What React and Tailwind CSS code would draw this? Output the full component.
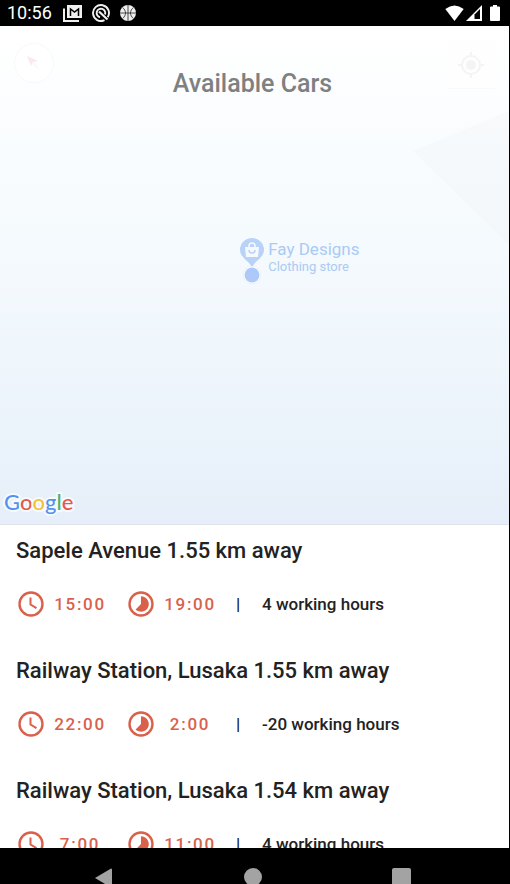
import React from 'react'

const cars = [
  { id: 1, title: 'Sapele Avenue 1.55 km away', from: '15:00', to: '19:00', hours: 4 },
  { id: 2, title: 'Railway Station, Lusaka 1.55 km away', from: '22:00', to: '2:00', hours: -20 },
  { id: 3, title: 'Railway Station, Lusaka 1.54 km away', from: '7:00', to: '11:00', hours: 4 },
]

function StatusBar() {
  return (
    <header className="flex h-[26px] shrink-0 items-center justify-between bg-black pr-2 pl-[7px] text-white">
      <div className="flex items-center">
        <span className="w-14 text-lg leading-6">10:56</span>
        <svg className="h-[17px] w-[19px]" viewBox="0 0 19 17" fill="none" stroke="#f0f0f0" strokeWidth="2" aria-hidden="true">
          <path d="M1 3.5v12.5h15" />
          <path d="M4 0h15v13H4z" fill="#f0f0f0" stroke="none" />
          <path d="M7.5 11V4l4 3 4-3v7" stroke="#000" strokeWidth="1.5" />
        </svg>
        <svg className="ml-[10px] h-[18px] w-[18px]" viewBox="0 0 18 18" fill="none" stroke="#f0f0f0" strokeWidth="1.9" aria-hidden="true">
          <path d="M12.5 16.2A8 8 0 1 1 15.8 13.2" />
          <path d="M8 13.2A4.3 4.3 0 1 1 13 10.5" />
          <path d="M7 7.5l8.5 8" strokeWidth="2.2" />
        </svg>
        <svg className="ml-[10px] h-4 w-4" viewBox="0 0 16 16" aria-hidden="true">
          <circle cx="8" cy="8" r="8" fill="#eee" />
          <path d="M8 0v16M0 8h16M2.5 2.5c4 3 4 8 0 11M13.5 2.5c-4 3-4 8 0 11" fill="none" stroke="#222" strokeWidth="0.8" />
        </svg>
      </div>
      <div className="flex items-center">
        <svg className="h-4 w-[19px]" viewBox="0 0 19 16" fill="#fff" aria-hidden="true">
          <path d="M9.5 16L0.3 4Q9.5-3 18.7 4z" />
        </svg>
        <svg className="ml-[2px] h-4 w-4" viewBox="0 0 16 16" aria-hidden="true">
          <path d="M0 16L16 0v16z" fill="#fff" />
          <path d="M8.5 9.5L14 4v10H8.5z" fill="#000" />
        </svg>
        <svg className="mr-px ml-2 h-4 w-[10px]" viewBox="0 0 10 16" fill="#fff" aria-hidden="true">
          <path d="M3 0h4v1.5h2q1 0 1 1V15q0 1-1 1H1q-1 0-1-1V2.5q0-1 1-1h2z" />
        </svg>
      </div>
    </header>
  )
}

function GoogleLogo() {
  return (
    <div
      className="absolute bottom-[6px] left-1 text-[22px] leading-8 font-medium [paint-order:stroke_fill] [-webkit-text-stroke:4px_#f7fafd]"
      style={{ fontFamily: 'Lato, sans-serif' }}
    >
      <span className="text-[#5592ec]">G</span>
      <span className="text-[#e2594c]">o</span>
      <span className="text-[#f5c132]">o</span>
      <span className="text-[#5592ec]">g</span>
      <span className="text-[#55b06d]">l</span>
      <span className="text-[#e2594c]">e</span>
    </div>
  )
}

function StoreMarker() {
  return (
    <div className="absolute top-[211px] left-[47%] flex gap-1 pl-px text-[#aacbf4]">
      <svg className="h-12 w-6" viewBox="0 0 24 48" aria-hidden="true">
        <path d="M12 31C10 24 0 21 0 13a12 12 0 0 1 24 0C24 21 14 24 12 31z" fill="#b8d2f8" />
        <path d="M5 10h14l-1 10H6z" fill="#f5f9fe" />
        <path d="M9 11V9a3 3 0 0 1 6 0v2" fill="none" stroke="#f5f9fe" strokeWidth="1.6" />
        <path d="M9 13a3 3 0 0 0 6 0" fill="none" stroke="#b8d2f8" strokeWidth="1.5" />
        <circle cx="12" cy="38" r="9" fill="#dfe8f1" />
        <circle cx="12" cy="38" r="8.5" fill="#fff" />
        <circle cx="12" cy="38" r="7.5" fill="#acc9f8" />
      </svg>
      <div className="pt-[2px]">
        <p className="text-[17px] leading-5">Fay Designs</p>
        <p className="text-[13px] leading-4">Clothing store</p>
      </div>
    </div>
  )
}

function MapView() {
  return (
    <section className="relative min-h-0 flex-[17] overflow-hidden border-b border-[#e0e3ea] bg-linear-to-b from-white via-[#f3f9fd] to-[#e6eff9]">
      <svg className="absolute top-20 right-0 h-36 w-24" viewBox="0 0 96 144" aria-hidden="true">
        <path d="M0 45L96 5v134z" fill="#dfe3e6" opacity="0.1" />
      </svg>
      <button
        className="absolute top-[17px] left-[14px] flex h-10 w-10 items-center justify-center rounded-full border border-[#f9f9fa] bg-white"
        aria-label="Compass"
      >
        <svg className="h-4 w-4" viewBox="0 0 16 16" aria-hidden="true">
          <path d="M1 1l11 5-5 1-2 4z" fill="#fbe9ea" />
          <path d="M6 10l3-3 5 8z" fill="#fafafb" />
        </svg>
      </button>
      <button
        className="absolute top-[15px] right-[14px] flex h-12 w-12 items-center justify-center border-b border-[#f9f9f9] bg-[#fefefe]"
        aria-label="My location"
      >
        <svg className="h-[26px] w-[26px]" viewBox="0 0 26 26" fill="none" stroke="#f4f4f4" strokeWidth="2" aria-hidden="true">
          <circle cx="13" cy="13" r="9" />
          <circle cx="13" cy="13" r="5" fill="#f4f4f4" stroke="none" />
          <path d="M13 0v4M13 22v4M0 13h4M22 13h4" />
        </svg>
      </button>
      <h1 className="pt-[42px] pr-1 text-center text-[25px] leading-8 font-medium text-[#7f8080]">Available Cars</h1>
      <StoreMarker />
      <GoogleLogo />
    </section>
  )
}

function ClockIcon() {
  return (
    <svg className="h-[26px] w-[26px]" viewBox="0 0 26 26" fill="none" stroke="#d9614c" aria-hidden="true">
      <circle cx="13" cy="13" r="11.5" strokeWidth="2.4" />
      <path d="M12.5 6.5v7l6 3.7" strokeWidth="2" />
    </svg>
  )
}

function TimelapseIcon() {
  return (
    <svg className="h-[26px] w-[26px]" viewBox="0 0 26 26" aria-hidden="true">
      <circle cx="13" cy="13" r="11.5" fill="none" stroke="#d9614c" strokeWidth="2.4" />
      <path d="M13 5.3a7.7 7.7 0 1 1-5.4 13.1L13 13z" fill="#d9614c" />
    </svg>
  )
}

function CarItem({ car }) {
  return (
    <li className="h-[120px] px-4 pt-[10px]">
      <h2 className="text-[22px] leading-8 font-medium whitespace-nowrap">{car.title}</h2>
      <div className="mt-6 flex items-center text-[17px] leading-[26px] font-medium">
        <button className="ml-[2px] flex items-center gap-1 text-[#d9614c]">
          <ClockIcon />
          <span className="w-16 text-center tracking-widest">{car.from}</span>
        </button>
        <button className="ml-4 flex items-center gap-1 text-[#d9614c]">
          <TimelapseIcon />
          <span className="w-16 text-center tracking-widest">{car.to}</span>
        </button>
        <span className="ml-3 w-2 text-center">|</span>
        <span className="ml-5">{car.hours} working hours</span>
      </div>
    </li>
  )
}

function NavBar() {
  return (
    <nav className="grid h-9 shrink-0 grid-cols-[1fr_90px_1fr] overflow-hidden bg-black pt-5 pr-[98px] pl-[94px]">
      <button className="flex items-start" aria-label="Back">
        <svg className="h-5 w-[18px]" viewBox="0 0 18 20" fill="#a3a3a3" aria-hidden="true">
          <path d="M1 10L17 0.5q1 0 1 1v17q0 1-1 1z" />
        </svg>
      </button>
      <button className="flex items-start justify-center" aria-label="Home">
        <span className="h-[18px] w-[18px] rounded-full bg-[#a3a3a3]" />
      </button>
      <button className="flex items-start justify-end" aria-label="Recent apps">
        <span className="h-5 w-[19px] rounded-xs bg-[#a3a3a3]" />
      </button>
    </nav>
  )
}

function App() {
  return (
    <div className="flex h-screen flex-col overflow-hidden bg-black pr-px text-[#222]" style={{ fontFamily: 'Roboto, sans-serif' }}>
      <StatusBar />
      <MapView />
      <ul className="min-h-0 flex-[11] overflow-x-hidden overflow-y-auto bg-white [scrollbar-width:none]">
        {cars.map((car) => (
          <CarItem key={car.id} car={car} />
        ))}
      </ul>
      <NavBar />
    </div>
  )
}

export default App
